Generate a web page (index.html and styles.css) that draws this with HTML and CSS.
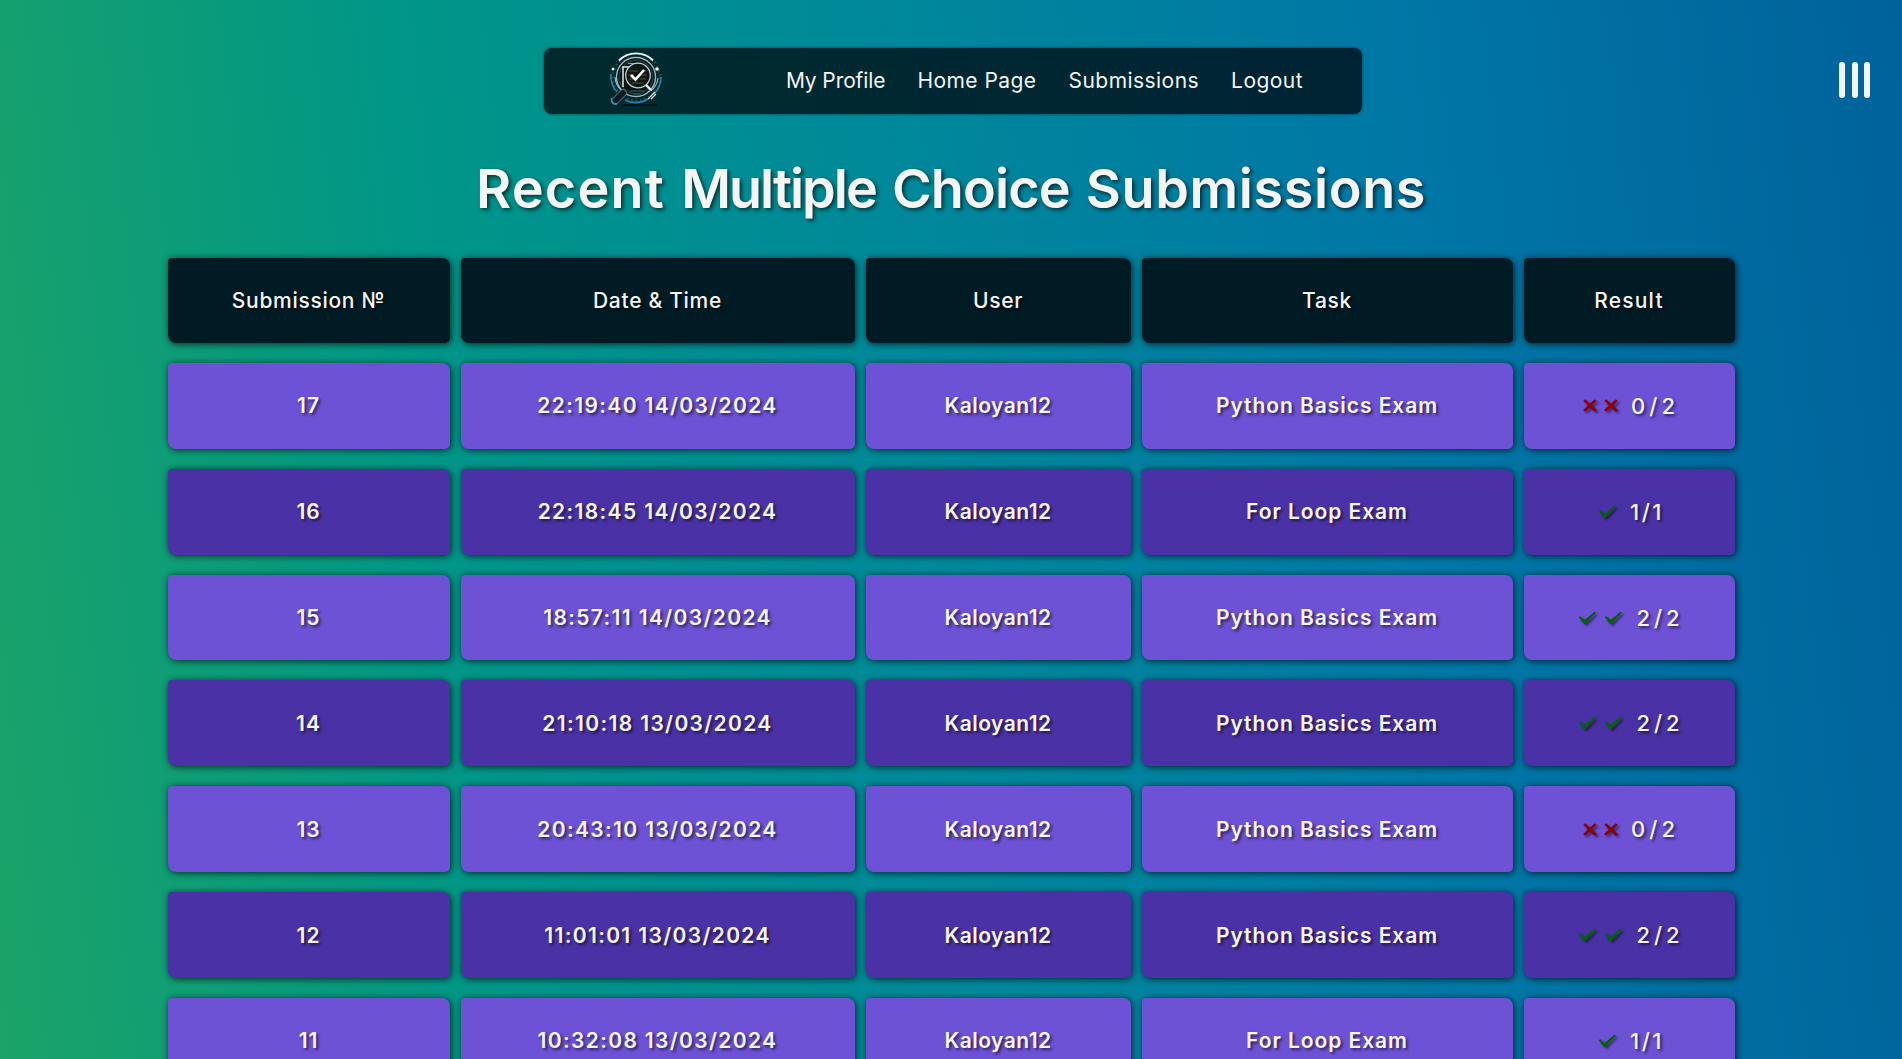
FILE: index.html
```html
<!DOCTYPE html>
<html lang="en">
<head>
<meta charset="utf-8">
<title>Recent Multiple Choice Submissions</title>
<link rel="stylesheet" href="styles.css">
</head>
<body>
<svg class="defs" aria-hidden="true">
  <symbol id="check" viewBox="0 0 20 14"><path d="M.8 6.2 2.2 5 7 9.2 17 .5 19 1.2 7.6 13.2 6.4 13.3Z"/></symbol>
  <symbol id="cross" viewBox="0 0 14 13"><path d="M2.2.3 7 4.500 11.800.3 13.700 1.700 9.100 6.400 13.900 11 12 12.800 7 8.400 2 12.800.1 11 4.900 6.400.3 1.700Z"/></symbol>
</svg>
<header class="top">
  <nav class="navbar">
    <svg class="logo" viewBox="0 0 56 56" fill="none">
      <circle cx="28.500" cy="26" r="23.500" stroke="#2c5358" stroke-width="2" stroke-dasharray="1.500 3"/>
      <circle cx="28" cy="26" r="25.500" stroke="#1f4448" stroke-width="1.200" stroke-dasharray="1 5"/>
      <path d="M11 9.500A24 24 0 0 1 45 9.500" stroke="#e9f2f3" stroke-width="1.800"/>
      <path d="M3 23A24 24 0 0 0 9 41M53 26A24 24 0 0 1 46 43M40 48A24 24 0 0 1 17 49" stroke="#2d7fb5" stroke-width="1.600"/>
      <path d="M7 26A20 20 0 0 0 14 40M50 27A20 20 0 0 1 43 40" stroke="#8ab8cc" stroke-width="1.200"/>
      <circle cx="28" cy="26" r="19.500" fill="#031314" stroke="#9fb4b8" stroke-width="1.400"/>
      <circle cx="28" cy="26" r="16.800" stroke="#1c3a40" stroke-width="1.500"/>
      <path d="M15 36V16H36" stroke="#e4ecec" stroke-width="1.500"/>
      <path d="M20 12.500H31" stroke="#7f9599" stroke-width="1.200"/>
      <circle cx="30" cy="24.500" r="12.300" fill="#0c1719" stroke="#c3d0d2" stroke-width="1.300"/>
      <path d="M21 20H30M33 20H38M20 24H26M32 24H39M21 28H29M32 28H38M24 32H36" stroke="#6b4a20" stroke-width="1.200"/>
      <path d="M23 24 27.500 28.500 36 19" stroke="#fff" stroke-width="2.600"/>
      <path d="M38 34 43 39" stroke="#e9f2f3" stroke-width="2.400"/>
      <path d="M22 40H36M25 43H33" stroke="#294c50" stroke-width="1.500"/>
      <path d="M15 42 7 50" stroke="#56707a" stroke-width="7.500" stroke-linecap="round"/>
      <path d="M15 42 7 50" stroke="#0a1a20" stroke-width="5.800" stroke-linecap="round"/>
      <path d="M3.500 47Q3 53 9 53" stroke="#3a94cc" stroke-width="1.500"/>
      <path d="M40 48 47 41M43 48 48 43" stroke="#dce6e8" stroke-width="1.200"/>
      <circle cx="5" cy="18" r="1.500" fill="#d8e6e8"/><circle cx="49" cy="18" r="1.800" fill="#fff"/>
      <path d="M14 54H49" stroke="#00171a" stroke-width="2"/>
    </svg>
    <ul class="links">
      <li class="tight">My Profile</li><li>Home Page</li><li>Submissions</li><li>Logout</li>
    </ul>
  </nav>
  <div class="menu"><i></i><i></i><i></i></div>
</header>
<h1 class="title"><span class="w-recent">Recent</span> <span class="w-multiple">Multiple</span> <span class="w-choice">Choice</span> <span class="w-submissions">Submissions</span></h1>
<main class="grid">
  <div class="row head"><div>Submission №</div><div>Date &amp; Time</div><div>User</div><div>Task</div><div class="wide">Result</div></div>
  <div class="row"><div>17</div><div class="date">22:19:40 14/03/2024</div><div class="user">Kaloyan12</div><div>Python Basics Exam</div><div class="result"><svg class="cross"><use href="#cross"/></svg><svg class="cross"><use href="#cross"/></svg><b>0/2</b></div></div>
  <div class="row dark"><div>16</div><div class="date">22:18:45 14/03/2024</div><div class="user">Kaloyan12</div><div>For Loop Exam</div><div class="result single"><svg class="check"><use href="#check"/></svg><b>1/1</b></div></div>
  <div class="row"><div>15</div><div class="date">18:57:11 14/03/2024</div><div class="user">Kaloyan12</div><div>Python Basics Exam</div><div class="result"><svg class="check"><use href="#check"/></svg><svg class="check"><use href="#check"/></svg><b>2/2</b></div></div>
  <div class="row dark"><div>14</div><div class="date">21:10:18 13/03/2024</div><div class="user">Kaloyan12</div><div>Python Basics Exam</div><div class="result"><svg class="check"><use href="#check"/></svg><svg class="check"><use href="#check"/></svg><b>2/2</b></div></div>
  <div class="row"><div>13</div><div class="date">20:43:10 13/03/2024</div><div class="user">Kaloyan12</div><div>Python Basics Exam</div><div class="result"><svg class="cross"><use href="#cross"/></svg><svg class="cross"><use href="#cross"/></svg><b>0/2</b></div></div>
  <div class="row dark"><div>12</div><div class="date">11:01:01 13/03/2024</div><div class="user">Kaloyan12</div><div>Python Basics Exam</div><div class="result"><svg class="check"><use href="#check"/></svg><svg class="check"><use href="#check"/></svg><b>2/2</b></div></div>
  <div class="row"><div>11</div><div class="date">10:32:08 13/03/2024</div><div class="user">Kaloyan12</div><div>For Loop Exam</div><div class="result single"><svg class="check"><use href="#check"/></svg><b>1/1</b></div></div>
</main>
</body>
</html>
```
FILE: styles.css
```css
* { box-sizing: border-box; }
body {
  margin: 0;
  height: 1059px;
  overflow: hidden;
  font-family: Inter, "Liberation Sans", sans-serif;
  color: #f5f5f5;
  background: linear-gradient(84deg, #1ba368 0%, #009688 25%, #00889b 50%, #0077a6 75%, #00629b 100%);
}
.defs { display: none; }
.top {
  display: grid;
  grid-template-columns: 1fr 818px 1fr;
  align-items: start;
  padding-top: 48px;
  height: 168px;
}
.navbar {
  grid-column: 2;
  height: 66px;
  margin-left: 2px;
  margin-right: -2px;
  display: flex;
  align-items: center;
  justify-content: space-between;
  padding: 0 59px 0 64px;
  border-radius: 8px;
  background: rgba(0, 3, 9, 0.72);
  box-shadow: 0 0 3px rgba(0, 0, 0, 0.6);
}
.logo { width: 56px; height: 56px; margin-top: -5px; }
.links {
  display: flex;
  gap: 32px;
  margin: 0;
  padding: 0;
  list-style: none;
  font-size: 21px;
  line-height: 30px;
  letter-spacing: 0.450px;
  white-space: nowrap;
}
.links .tight { letter-spacing: -0.100px; }
.menu {
  justify-self: end;
  display: flex;
  gap: 6.500px;
  margin: 14px 32px 0 0;
}
.menu i { width: 6px; height: 36px; border-radius: 3px; background: #f5f5f5; }
.title {
  display: flex;
  justify-content: center;
  margin: 0;
  gap: 16px;
  height: 89px;
  font-size: 54px;
  line-height: 42px;
  font-weight: 600;
  text-shadow: 2px 2px 4px #000a;
}
.w-recent { letter-spacing: 1.200px; }
.w-multiple { letter-spacing: -2px; }
.w-choice { letter-spacing: -0.900px; }
.w-submissions { letter-spacing: 0.600px; }
.grid { display: grid; gap: 20px; width: 1567px; margin: 0 auto; padding: 1px 0 0; }
.row {
  display: grid;
  grid-template-columns: 282px 394px 265px 371px 211px;
  gap: 11px;
  height: 85.830px;
}
.row > div {
  display: flex;
  align-items: center;
  justify-content: center;
  border-radius: 4px 8px 5px 8px;
  background: #6d52d6;
  box-shadow: 1px 1px 7px rgba(0, 0, 0, 0.75);
  font-size: 21px;
  font-weight: 600;
  letter-spacing: 0.950px;
  white-space: nowrap;
  text-shadow: 2px 2px 3px rgba(0, 0, 0, 0.6);
}
.row.dark > div { background: #4a32a6; }
.row.head { height: 85px; }
.row.head > div { background: #001b24; letter-spacing: 0.700px; font-weight: 500; }
.row > .date { letter-spacing: 1.350px; }
.row > .user { letter-spacing: 0.450px; }
.row.head > .wide { letter-spacing: 1.200px; }
.row > .result { letter-spacing: 4px; }
.row > .single { letter-spacing: 2.500px; }
.result b { font-size: 22px; font-weight: 500; margin: 0 -4px 0 6px; }
.result svg { filter: drop-shadow(2px 2px 1px rgba(0, 0, 0, 0.5)); margin-right: 7px; }
.check { width: 19px; height: 14px; fill: #006400; }
.cross { width: 14px; height: 13px; fill: #8b0000; }
```
